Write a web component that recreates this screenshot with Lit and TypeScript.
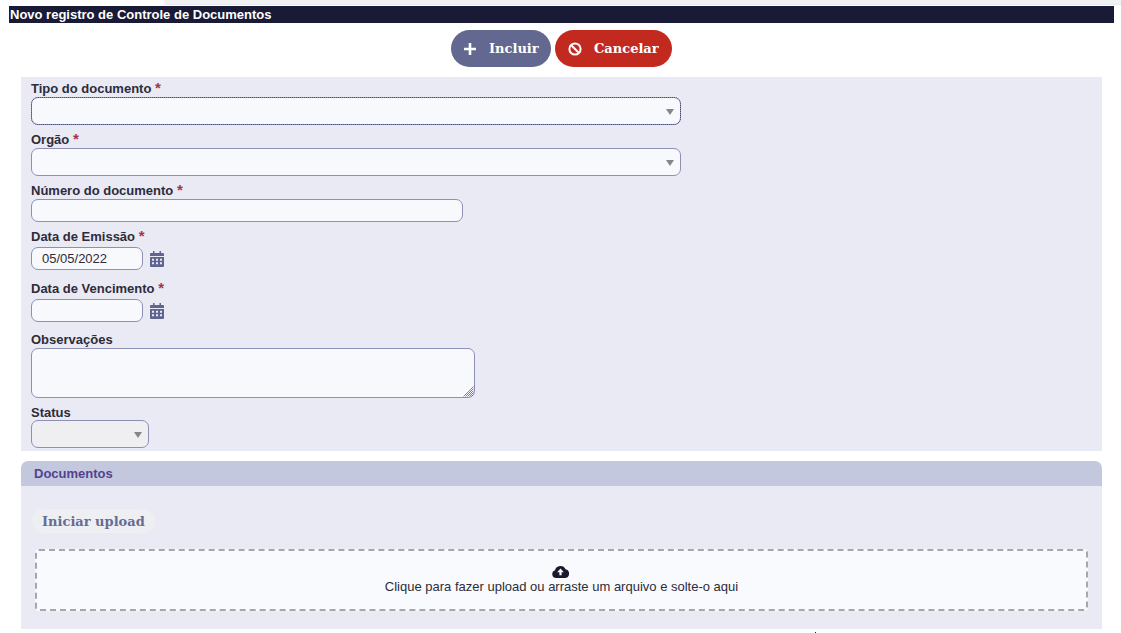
import { LitElement, html, css } from "lit";
import { customElement } from "lit/decorators.js";

const calendar = html`<svg class="cal" viewBox="0 0 14 16" width="14" height="16" aria-hidden="true"><path fill="currentColor" fill-rule="evenodd" d="M3 0h1.5v2h5V0H11v2h2a1 1 0 0 1 1 1v2H0V3a1 1 0 0 1 1-1h2zM0 6h14v9a1 1 0 0 1-1 1H1a1 1 0 0 1-1-1zm2 1.7v2h2v-2zm4 0v2h2v-2zm4 0v2h2v-2zm-8 3.6v2h2v-2zm4 0v2h2v-2zm4 0v2h2v-2z"/></svg>`;

@customElement("app-root")
export class AppRoot extends LitElement {
  static styles = css`
    :host { display: block; position: relative; height: 633px; overflow: hidden; background: #fff; font-family: "Liberation Sans", Arial, sans-serif; color: #2c2c3a; }
    * { box-sizing: border-box; }
    .strip { height: 5px; margin-left: 164px; background: #f1f1f1; border-bottom: 1px solid #e6ebf5; border-bottom-left-radius: 4px; }
    .page { padding: 1px 7px 0 9px; }
    .title { height: 17px; background: #191a35; color: #fff; font-weight: 700; font-size: 13px; line-height: 18px; padding-left: 1px; }
    .actions { height: 54px; display: flex; justify-content: center; align-items: flex-start; gap: 4px; padding-top: 7px; }
    .btn { height: 37px; border: 0; border-radius: 19px; color: #fff; display: flex; align-items: center; font-family: "DejaVu Serif", serif; font-weight: 700; font-size: 13px; }
    .btn svg { display: block; }
    .inc { width: 100px; background: #62688f; padding-left: 13px; gap: 13px; }
    .can { width: 117px; background: #c22a20; padding-left: 13px; gap: 12px; }
    .panel { margin: 0 12px; background: #eaeaf5; }
    .form { height: 374px; padding: 3px 10px 0; display: flex; flex-direction: column; align-items: flex-start; }
    label { display: block; font-weight: 700; font-size: 13px; line-height: 15px; height: 17px; padding-top: 1px; color: #2c2c3a; white-space: nowrap; }
    label.tall { height: 19px; }
    label.short { height: 16px; }
    label b { color: #a8324a; font-size: 15px; font-weight: 700; line-height: 0; }
    .f { border: 1px solid #8c90b6; border-radius: 7px; background: #f8f9fc; position: relative; font-size: 13px; }
    .sel { width: 650px; height: 28px; }
    .sel::after { content: ""; position: absolute; right: 6px; top: 11px; border: 4.5px solid transparent; border-top: 6px solid #85858f; border-bottom: 0; }
    .focus { outline: 1px dotted #4a4a6e; outline-offset: -1px; }
    .mb { margin-bottom: 6px; }
    .txt { width: 432px; height: 23px; margin-bottom: 6px; }
    .date-row { display: flex; align-items: center; gap: 7px; color: #5f6590; height: 23px; margin-bottom: 10px; }
    .date-row.last { margin-bottom: 9px; }
    .date { width: 112px; height: 23px; padding-left: 10px; line-height: 21px; color: #2c2c3a; }
    .cal { margin-top: 1px; }
    .area { width: 444px; height: 50px; margin-bottom: 6px; }
    .grip { position: absolute; right: 0; bottom: 0; display: block; }
    .status { width: 118px; height: 28px; background: #efeff2; }
    .head { height: 25px; margin: 10px 12px 0; background: #c3c8df; border-radius: 7px 7px 0 0; color: #534290; font-weight: 700; font-size: 13px; line-height: 25px; padding-left: 13px; }
    .docs { height: 143px; padding: 23px 14px 0; }
    .upload { display: block; width: max-content; margin-left: -3px; height: 24px; padding: 0 10px; border-radius: 12px; background: #eeeff2; color: #666c95; font-family: "DejaVu Serif", serif; font-weight: 700; font-size: 13px; line-height: 26px; }
    .zone { margin-top: 16px; height: 62px; border: 2px dashed #a6a6ac; border-radius: 4px; background: #f9fafd; display: flex; flex-direction: column; align-items: center; padding-top: 14px; font-size: 13px; line-height: 15px; color: #2c2c3a; }
    .zone svg { display: block; margin-bottom: 1px; margin-right: 2px; }
    .speck { position: absolute; left: 815px; top: 632px; width: 1px; height: 1px; background: #222; }
  `;

  render() {
    return html`<div class="strip"></div><div class="page">
      <div class="title">Novo registro de Controle de Documentos</div>
      <div class="actions">
        <div class="btn inc"><svg width="12" height="12" viewBox="0 0 12 12"><path d="M4.7 0h2.6v4.7H12v2.6H7.3V12H4.7V7.3H0V4.7h4.7z" fill="#fff"/></svg><span>Incluir</span></div>
        <div class="btn can"><svg width="14" height="14" viewBox="0 0 14 14"><circle cx="7" cy="7" r="5.6" fill="none" stroke="#fff" stroke-width="2"/><path d="M3 3l8 8" stroke="#fff" stroke-width="2"/></svg><span>Cancelar</span></div>
      </div>
      <div class="panel form">
        <label>Tipo do documento <b>*</b></label>
        <div class="f sel focus mb"></div>
        <label>Orgão <b>*</b></label>
        <div class="f sel mb"></div>
        <label>Número do documento <b>*</b></label>
        <div class="f txt"></div>
        <label class="tall">Data de Emissão <b>*</b></label>
        <div class="date-row"><div class="f date">05/05/2022</div>${calendar}</div>
        <label class="tall">Data de Vencimento <b>*</b></label>
        <div class="date-row last"><div class="f date"></div>${calendar}</div>
        <label>Observações</label>
        <div class="f area"><svg class="grip" width="11" height="11" viewBox="0 0 11 11"><path d="M10.5 .5L.5 10.5M10.5 2.5L2.5 10.5M10.5 4.5L4.5 10.5M10.5 6.5L6.5 10.5M10.5 8.5L8.5 10.5" stroke="#777" stroke-width=".9" fill="none"/></svg></div>
        <label class="short">Status</label>
        <div class="f sel status"></div>
      </div>
      <div class="head">Documentos</div>
      <div class="panel docs">
        <div class="upload">Iniciar upload</div>
        <div class="zone">
          <svg width="17" height="13" viewBox="0 0 17 13"><path fill="#191a2e" fill-rule="evenodd" d="M4 13a4 4 0 0 1-1-7.8A5.6 5.6 0 0 1 13.6 4.3 4.4 4.4 0 0 1 13 13zM8.5 3.6 5.2 7.2h2.2v3h2.2v-3h2.2z"/></svg>
          <span>Clique para fazer upload ou arraste um arquivo e solte-o aqui</span>
        </div>
      </div>
    </div><div class="speck"></div>`;
  }
}
